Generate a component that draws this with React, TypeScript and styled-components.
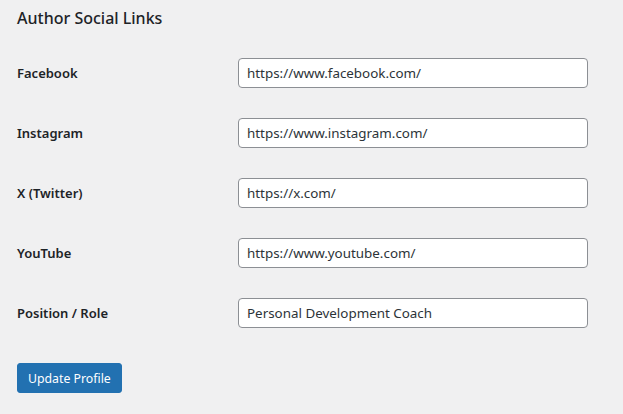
import React from "react";
import styled, { createGlobalStyle } from "styled-components";

const Global = createGlobalStyle`
  html, body { margin: 0; padding: 0; background: #f0f0f1; }
  body { font-family: "Noto Sans", "Open Sans", sans-serif; color: #1d2327; font-size: 13px; }
`;

const Page = styled.div`
  padding: 0 17px;
  width: 623px;
  box-sizing: border-box;
`;

const Heading = styled.h2`
  margin: 0;
  padding-top: 7px;
  height: 28px;
  font-size: 16px;
  line-height: 22px;
  font-weight: 500;
  color: #1d2327;
`;

const Table = styled.div`
  display: grid;
  grid-template-columns: 221px 350px;
  margin-top: 8px;
`;

const Label = styled.label`
  display: flex;
  align-items: center;
  height: 60px;
  font-size: 13px;
  font-weight: 600;
  color: #1d2327;
`;

const Cell = styled.div`
  display: flex;
  align-items: center;
  height: 60px;
`;

const Input = styled.input`
  box-sizing: border-box;
  width: 350px;
  height: 30px;
  padding: 0 8px;
  border: 1px solid #8c8f94;
  border-radius: 4px;
  background: #fff;
  font-family: inherit;
  font-size: 13.4px;
  color: #2c3338;
  outline: none;
`;

const Button = styled.button`
  margin-top: 20px;
  height: 30px;
  padding: 0 10px;
  border: 1px solid #2271b1;
  border-radius: 3px;
  background: #2271b1;
  color: #fff;
  font-family: inherit;
  font-size: 12.3px;
  cursor: pointer;
`;

const rows = [
  ["Facebook", "https://www.facebook.com/"],
  ["Instagram", "https://www.instagram.com/"],
  ["X (Twitter)", "https://x.com/"],
  ["YouTube", "https://www.youtube.com/"],
  ["Position / Role", "Personal Development Coach"],
];

export default function App() {
  return (
    <Page>
      <Global />
      <Heading>Author Social Links</Heading>
      <Table>
        {rows.map(([label, value]) => (
          <React.Fragment key={label}>
            <Label>{label}</Label>
            <Cell>
              <Input defaultValue={value} />
            </Cell>
          </React.Fragment>
        ))}
      </Table>
      <Button>Update Profile</Button>
    </Page>
  );
}
